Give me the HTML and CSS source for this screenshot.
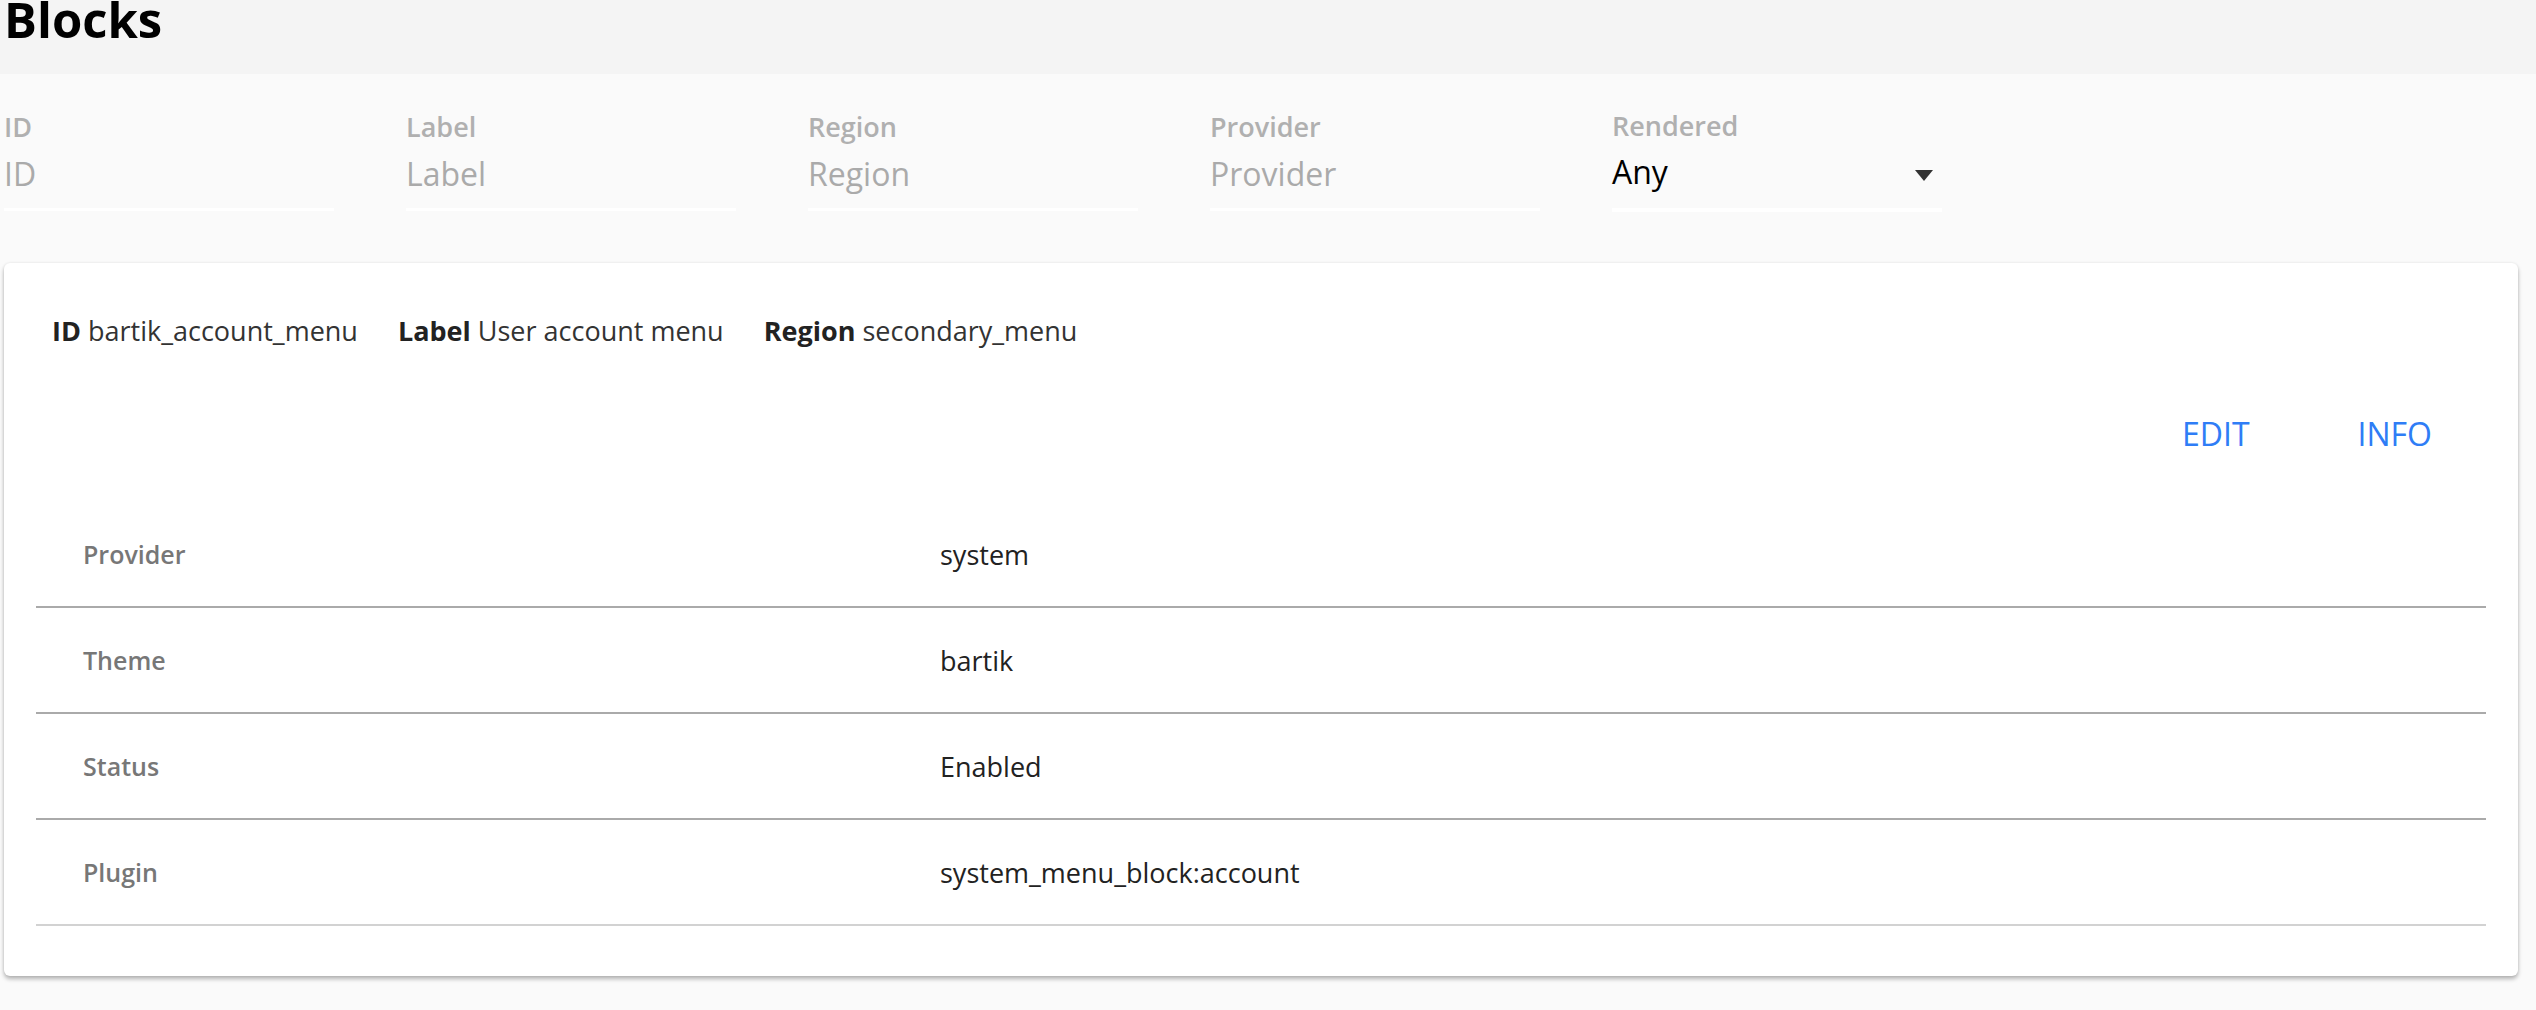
FILE: index.html
```html
<!DOCTYPE html>
<html lang="en">
<head>
<meta charset="utf-8">
<title>Blocks</title>
<link rel="stylesheet" href="styles.css">
</head>
<body>
<header class="page-header">
  <h1 class="page-title">Blocks</h1>
</header>
<section class="filters">
  <div class="field">
    <label class="field-label">ID</label>
    <div class="field-input placeholder">ID</div>
  </div>
  <div class="field">
    <label class="field-label">Label</label>
    <div class="field-input placeholder">Label</div>
  </div>
  <div class="field">
    <label class="field-label">Region</label>
    <div class="field-input placeholder">Region</div>
  </div>
  <div class="field">
    <label class="field-label">Provider</label>
    <div class="field-input placeholder">Provider</div>
  </div>
  <div class="field field-select">
    <label class="field-label">Rendered</label>
    <div class="field-input select-value">
      <span>Any</span>
      <span class="caret"></span>
    </div>
  </div>
</section>
<main class="card">
  <div class="card-summary">
    <span class="summary-item"><b>ID</b> bartik_account_menu</span>
    <span class="summary-item"><b>Label</b> User account menu</span>
    <span class="summary-item"><b>Region</b> secondary_menu</span>
  </div>
  <div class="card-actions">
    <button class="text-button">EDIT</button>
    <button class="text-button">INFO</button>
  </div>
  <div class="details">
    <div class="detail-row">
      <div class="detail-key">Provider</div>
      <div class="detail-value">system</div>
    </div>
    <div class="detail-row">
      <div class="detail-key">Theme</div>
      <div class="detail-value">bartik</div>
    </div>
    <div class="detail-row">
      <div class="detail-key">Status</div>
      <div class="detail-value">Enabled</div>
    </div>
    <div class="detail-row detail-row-last">
      <div class="detail-key">Plugin</div>
      <div class="detail-value">system_menu_block:account</div>
    </div>
  </div>
</main>
</body>
</html>
```

FILE: styles.css
```css
* { box-sizing: border-box; }

html, body {
  margin: 0;
  padding: 0;
}

body {
  background: #fafafa;
  font-family: "Open Sans", "Noto Sans", sans-serif;
  color: #222;
  width: 2536px;
  height: 1010px;
  overflow: hidden;
}

.page-header {
  height: 74px;
  background: #f4f4f4;
  padding-left: 4px;
  padding-top: 1px;
}

.page-title {
  margin: 0;
  font-size: 49px;
  font-weight: 700;
  line-height: 36px;
  color: #000;
}

.filters {
  display: flex;
  gap: 72px;
  padding: 40px 0 0 4px;
}

.field {
  width: 330px;
  display: flex;
  flex-direction: column;
}

.field-label {
  font-size: 27px;
  font-weight: 600;
  line-height: 26px;
  color: #b0b0b0;
}

.field-input {
  margin-top: 14px;
  font-size: 32px;
  line-height: 40px;
  padding-bottom: 14px;
  border-bottom: 3px solid #ffffff;
}

.placeholder {
  color: #aaaaaa;
}

.field-select .field-label {
  margin-top: -1px;
}

.select-value {
  color: #000;
  display: flex;
  align-items: center;
  justify-content: space-between;
  margin-top: 13px;
  padding-bottom: 16px;
  border-bottom-width: 4px;
}

.caret {
  width: 0;
  height: 0;
  border-left: 9px solid transparent;
  border-right: 9px solid transparent;
  border-top: 11px solid #333;
  margin-right: 9px;
  margin-top: 6px;
}

.card {
  margin: 51px 18px 0 4px;
  background: #fff;
  border-radius: 6px;
  box-shadow: 0 3px 4px rgba(0, 0, 0, 0.28), 0 0 3px rgba(0, 0, 0, 0.08);
  padding: 50px 32px 50px 32px;
}

.card-summary {
  display: flex;
  gap: 40px;
  padding-left: 16px;
  font-size: 27px;
  line-height: 36px;
  color: #333;
}

.summary-item b {
  font-weight: 700;
  color: #222;
}

.card-actions {
  display: flex;
  justify-content: flex-end;
  margin-top: 49px;
}

.text-button {
  background: none;
  border: none;
  font-family: inherit;
  font-size: 32px;
  font-weight: 500;
  line-height: 72px;
  height: 72px;
  padding: 0 54px;
  color: #2f7df6;
  cursor: pointer;
}

.details {
  margin-top: 32px;
}

.detail-row {
  display: flex;
  align-items: center;
  height: 106px;
  border-bottom: 2px solid #aaaaaa;
}

.detail-row-last {
  border-bottom-color: #d2d2d2;
}

.detail-key {
  width: 904px;
  flex: none;
  padding-left: 47px;
  font-size: 25px;
  font-weight: 600;
  color: #777;
}

.detail-value {
  font-size: 27px;
  color: #222;
}
```
